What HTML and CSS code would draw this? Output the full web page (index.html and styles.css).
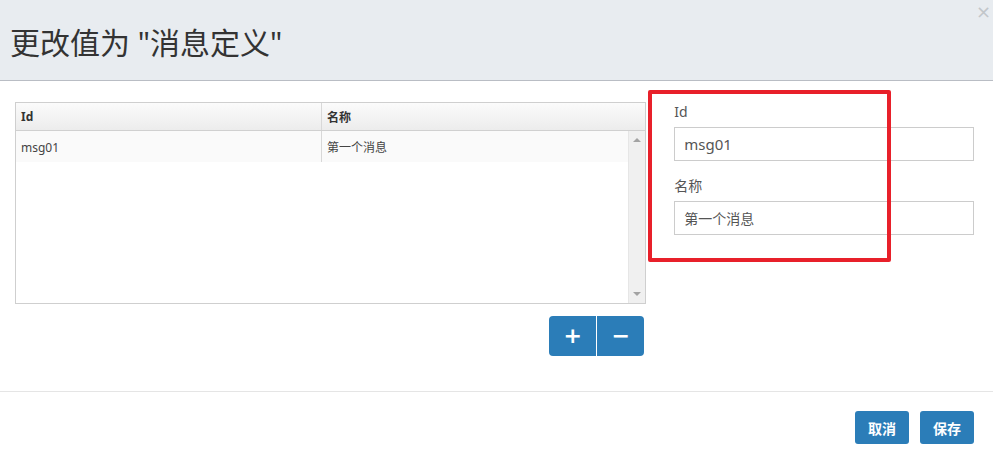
FILE: index.html
```html
<!DOCTYPE html>
<html lang="zh">
<head>
<meta charset="utf-8">
<link rel="stylesheet" href="styles.css">
</head>
<body>
<div class="modal">
  <div class="modal-header">
    <h1 class="title">更改值为 "消息定义"</h1>
    <span class="close">×</span>
  </div>
  <div class="modal-body">
    <div class="left">
      <div class="grid">
        <div class="grid-head">
          <div class="cell c1">Id</div>
          <div class="cell c2">名称</div>
        </div>
        <div class="grid-main">
          <div class="rows">
            <div class="row">
              <div class="cell c1">msg01</div>
              <div class="cell c2">第一个消息</div>
            </div>
          </div>
          <div class="scrollbar">
            <span class="arrow up"></span>
            <span class="arrow down"></span>
          </div>
        </div>
      </div>
      <div class="btn-group">
        <button class="btn-icon">+</button>
        <button class="btn-icon">−</button>
      </div>
    </div>
    <div class="right">
      <div class="field">
        <label class="label">Id</label>
        <div class="input">msg01</div>
      </div>
      <div class="field">
        <label class="label">名称</label>
        <div class="input">第一个消息</div>
      </div>
    </div>
    <div class="highlight"></div>
  </div>
  <div class="modal-footer">
    <button class="btn">取消</button>
    <button class="btn">保存</button>
  </div>
</div>
</body>
</html>
```

FILE: styles.css
```css
* { box-sizing: border-box; }
html, body { margin: 0; padding: 0; background: #fff; }
body {
  width: 993px;
  height: 455px;
  overflow: hidden;
  font-family: "Noto Sans", "Noto Sans CJK SC", sans-serif;
  color: #333;
}
.modal { position: relative; width: 993px; height: 455px; }
.modal-header {
  position: relative;
  height: 81px;
  background: #e8ecf0;
  border-bottom: 1px solid #b9bdc4;
  display: flex;
  align-items: center;
  padding: 2px 0 0 10px;
}
.title {
  margin: 0;
  font-size: 30px;
  font-weight: normal;
  color: #333;
}
.close {
  position: absolute;
  top: 0;
  right: 2px;
  font-family: "DejaVu Sans", sans-serif;
  font-size: 18px;
  line-height: 24px;
  color: #c2c6ca;
}
.modal-body {
  position: relative;
  height: 311px;
  display: flex;
  gap: 28px;
  padding: 21px 19px 0 15px;
  border-bottom: 1px solid #e5e5e5;
}
.left { width: 632px; display: flex; flex-direction: column; }
.grid {
  height: 202px;
  border: 1px solid #cfcfcf;
  display: flex;
  flex-direction: column;
  font-size: 12px;
}
.grid-head {
  height: 28px;
  display: flex;
  background: linear-gradient(#fbfbfb, #ececec);
  border-bottom: 1px solid #d0d0d0;
  font-weight: bold;
  color: #333;
}
.cell {
  display: flex;
  align-items: center;
  padding-left: 5px;
}
.c1 { width: 306px; border-right: 1px solid #d8d8d8; }
.c2 { flex: 1; }
.grid-main { flex: 1; display: flex; }
.rows { flex: 1; }
.row {
  height: 31px;
  display: flex;
  background: #fafafa;
  color: #444;
}
.row .cell { padding-top: 1px; }
.scrollbar {
  position: relative;
  width: 17px;
  background: #f0f0f0;
  border-left: 1px solid #e6e6e6;
}
.arrow {
  position: absolute;
  left: 4px;
  width: 0;
  height: 0;
  border-left: 4px solid transparent;
  border-right: 4px solid transparent;
}
.arrow.up { top: 7px; border-bottom: 4px solid #a3a3a3; }
.arrow.down { bottom: 7px; border-top: 4px solid #a3a3a3; }
.btn-group {
  align-self: flex-end;
  margin: 12px 2px 0 0;
  display: flex;
  gap: 1px;
  border-radius: 4px;
  overflow: hidden;
}
.btn-icon {
  width: 47px;
  height: 40px;
  border: 0;
  padding: 0;
  background: #2b7db8;
  color: #fff;
  font-family: "DejaVu Sans", sans-serif;
  font-size: 22px;
  font-weight: bold;
  line-height: 40px;
}
.right { width: 300px; }
.field { margin-bottom: 15px; }
.label {
  display: block;
  height: 20px;
  line-height: 20px;
  font-size: 14px;
  color: #555;
  margin-bottom: 5px;
}
.input {
  height: 34px;
  border: 1px solid #cccccc;
  padding: 0 9px;
  display: flex;
  align-items: center;
  font-size: 14px;
  color: #555;
}
.field:first-child .input { font-size: 15px; }
.highlight {
  position: absolute;
  left: 648px;
  top: 9px;
  width: 243px;
  height: 172px;
  border: 4px solid #e8202a;
  border-radius: 2px;
}
.modal-footer {
  display: flex;
  justify-content: flex-end;
  gap: 11px;
  padding: 19px 19px 0 0;
}
.btn {
  width: 54px;
  height: 33px;
  border: 0;
  border-radius: 3px;
  background: #2b7db8;
  color: #fff;
  font-family: "Noto Sans CJK SC", sans-serif;
  font-size: 14px;
  font-weight: bold;
  padding: 0;
}
```
